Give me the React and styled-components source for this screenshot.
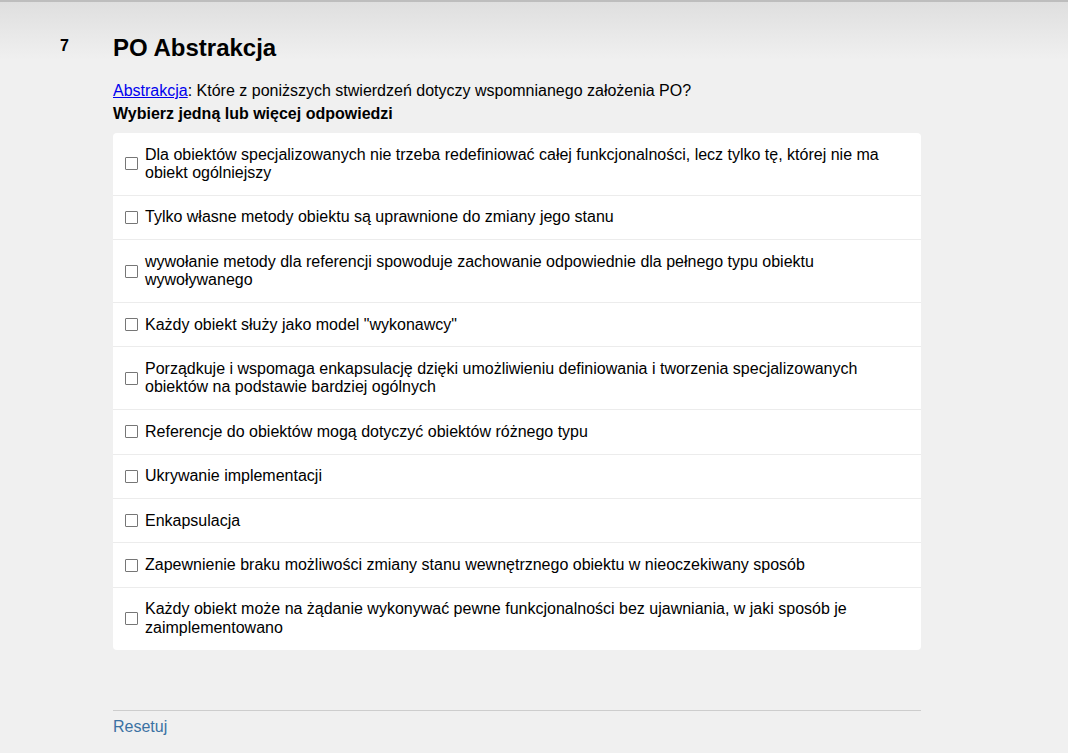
import React from 'react';
import styled, { createGlobalStyle } from 'styled-components';

const GlobalStyle = createGlobalStyle`
  html, body {
    margin: 0;
    padding: 0;
  }
  body {
    min-height: 753px;
    background: #f0f0f0 linear-gradient(#dedede, #f0f0f0 60px) no-repeat;
    border-top: 2px solid #bdbdbd;
    box-sizing: border-box;
    font-family: 'Liberation Sans', Arial, sans-serif;
    color: #000;
  }
`;

const Page = styled.div`
  display: grid;
  grid-template-columns: 53px 808px;
  padding: 32px 0 0 60px;
`;

const Number = styled.div`
  font-size: 16px;
  font-weight: bold;
  line-height: 18px;
  padding-top: 3px;
`;

const Content = styled.div`
  display: flex;
  flex-direction: column;
`;

const Title = styled.h1`
  margin: 0;
  font-size: 24px;
  font-weight: bold;
  line-height: 28px;
`;

const Question = styled.div`
  margin-top: 20px;
  font-size: 16px;
  line-height: 18px;

  a {
    color: #0000ee;
    text-decoration: underline;
  }
`;

const Hint = styled.div`
  margin-top: 5px;
  font-size: 16px;
  font-weight: bold;
  line-height: 18px;
`;

const Card = styled.div`
  margin-top: 10px;
  background: #fff;
  border-radius: 4px;
`;

const Row = styled.label`
  display: flex;
  align-items: center;
  gap: 7px;
  padding: 12.5px 12px;
  font-size: 16px;
  line-height: 18.4px;
  border-top: ${(p) => (p.$first ? 'none' : '1px solid #ececec')};
`;

const Box = styled.span`
  flex: none;
  width: 11px;
  height: 11px;
  border: 1px solid #767676;
  border-radius: 1px;
  background: #fff;
`;

const Footer = styled.div`
  margin-top: 60px;
  border-top: 1px solid #cdcdcd;
  padding-top: 7px;
  font-size: 16px;
  line-height: 18px;
  color: #3b72a3;
`;

const answers = [
  'Dla obiektów specjalizowanych nie trzeba redefiniować całej funkcjonalności, lecz tylko tę, której nie ma obiekt ogólniejszy',
  'Tylko własne metody obiektu są uprawnione do zmiany jego stanu',
  'wywołanie metody dla referencji spowoduje zachowanie odpowiednie dla pełnego typu obiektu wywoływanego',
  'Każdy obiekt służy jako model "wykonawcy"',
  'Porządkuje i wspomaga enkapsulację dzięki umożliwieniu definiowania i tworzenia specjalizowanych obiektów na podstawie bardziej ogólnych',
  'Referencje do obiektów mogą dotyczyć obiektów różnego typu',
  'Ukrywanie implementacji',
  'Enkapsulacja',
  'Zapewnienie braku możliwości zmiany stanu wewnętrznego obiektu w nieoczekiwany sposób',
  'Każdy obiekt może na żądanie wykonywać pewne funkcjonalności bez ujawniania, w jaki sposób je zaimplementowano',
];

export default function App() {
  return (
    <>
      <GlobalStyle />
      <Page>
        <Number>7</Number>
        <Content>
          <Title>PO Abstrakcja</Title>
          <Question>
            <a href="#">Abstrakcja</a>: Które z poniższych stwierdzeń dotyczy wspomnianego założenia PO?
          </Question>
          <Hint>Wybierz jedną lub więcej odpowiedzi</Hint>
          <Card>
            {answers.map((a, i) => (
              <Row key={i} $first={i === 0}>
                <Box />
                <span>{a}</span>
              </Row>
            ))}
          </Card>
          <Footer>Resetuj</Footer>
        </Content>
      </Page>
    </>
  );
}
